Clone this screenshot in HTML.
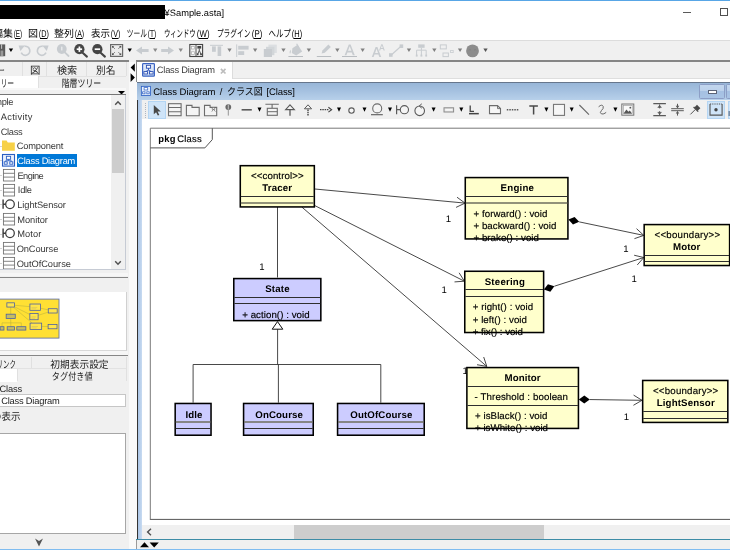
<!DOCTYPE html>
<html><head><meta charset="utf-8"><title>Sample.asta</title>
<style>
html,body{margin:0;padding:0}
body{width:730px;height:550px;overflow:hidden;background:#f0f0f0;position:relative;font-family:"Liberation Sans","Noto Sans CJK JP",sans-serif;text-rendering:geometricPrecision}
#w{position:absolute;left:0;top:0;width:730px;height:550px;overflow:hidden;will-change:transform}
.a{position:absolute;display:block}
.t{position:absolute;white-space:pre;line-height:1;font-family:"Liberation Sans","Noto Sans CJK JP",sans-serif}
svg{overflow:visible}
svg text{font-family:"Liberation Sans","Noto Sans CJK JP",sans-serif;text-rendering:geometricPrecision}
</style></head><body><div id="w">
<div class="a" style="left:0px;top:0px;width:730px;height:40px;background:#fff;"></div>
<div class="a" style="left:0px;top:0px;width:730px;height:1px;background:#58a6e6;"></div>
<div class="a" style="left:0px;top:4.8px;width:165px;height:14.2px;background:#000;"></div>
<span class="t" style="left:164.6px;top:9px;font-size:9.3px;color:#000;">¥Sample.asta]</span>
<div class="a" style="left:682.8px;top:11.9px;width:8.2px;height:0.9px;background:#5a5a5a;"></div>
<div class="a" style="left:720px;top:8.2px;width:8.4px;height:8.2px;border:0.85px solid #505050;box-sizing:border-box;"></div>
<svg class="a" style="left:-7.2px;top:27.21px" width="20.2" height="13.26" viewBox="0 -9.69 20.2 13.26"><text x="0" y="0" font-size="10" fill="#000">編集</text></svg>
<svg class="a" style="left:12.5px;top:27.21px" width="10.9" height="13.26" viewBox="0 -9.69 10.9 13.26"><text x="0.7" y="0" font-size="10" fill="#000" textLength="8.5" lengthAdjust="spacingAndGlyphs">(E)</text></svg>
<div class="a" style="left:15.1px;top:37.6px;width:4.7px;height:0.8px;background:#000;"></div>
<svg class="a" style="left:27.8px;top:27.21px" width="10.5" height="13.26" viewBox="0 -9.69 10.5 13.26"><text x="0" y="0" font-size="10" fill="#000">図</text></svg>
<svg class="a" style="left:37.8px;top:27.21px" width="12.7" height="13.26" viewBox="0 -9.69 12.7 13.26"><text x="0.8" y="0" font-size="10" fill="#000" textLength="10.1" lengthAdjust="spacingAndGlyphs">(D)</text></svg>
<div class="a" style="left:40.4px;top:37.6px;width:6.5px;height:0.8px;background:#000;"></div>
<svg class="a" style="left:54.3px;top:27.21px" width="20" height="13.26" viewBox="0 -9.69 20 13.26"><text x="0" y="0" font-size="10" fill="#000">整列</text></svg>
<svg class="a" style="left:73.8px;top:27.21px" width="12" height="13.26" viewBox="0 -9.69 12 13.26"><text x="0.8" y="0" font-size="10" fill="#000" textLength="9.4" lengthAdjust="spacingAndGlyphs">(A)</text></svg>
<div class="a" style="left:76.4px;top:37.6px;width:5.8px;height:0.8px;background:#000;"></div>
<svg class="a" style="left:90.6px;top:27.21px" width="19.7" height="13.26" viewBox="0 -9.69 19.7 13.26"><text x="0" y="0" font-size="10" fill="#000" textLength="19" lengthAdjust="spacingAndGlyphs">表示</text></svg>
<svg class="a" style="left:109.8px;top:27.21px" width="12.2" height="13.26" viewBox="0 -9.69 12.2 13.26"><text x="0.8" y="0" font-size="10" fill="#000" textLength="9.6" lengthAdjust="spacingAndGlyphs">(V)</text></svg>
<div class="a" style="left:112.4px;top:37.6px;width:6px;height:0.8px;background:#000;"></div>
<svg class="a" style="left:126px;top:27.21px" width="22.2" height="13.26" viewBox="0 -9.69 22.2 13.26"><text x="0.7" y="0" font-size="10" fill="#000" textLength="20.2" lengthAdjust="spacingAndGlyphs">ツール</text></svg>
<svg class="a" style="left:147.4px;top:27.21px" width="10.8" height="13.26" viewBox="0 -9.69 10.8 13.26"><text x="0.7" y="0" font-size="10" fill="#000" textLength="8.4" lengthAdjust="spacingAndGlyphs">(T)</text></svg>
<div class="a" style="left:150px;top:37.6px;width:4.6px;height:0.8px;background:#000;"></div>
<svg class="a" style="left:162.5px;top:27.21px" width="34.5" height="13.26" viewBox="0 -9.69 34.5 13.26"><text x="0.9" y="0" font-size="10" fill="#000" textLength="31.8" lengthAdjust="spacingAndGlyphs">ウィンドウ</text></svg>
<svg class="a" style="left:196.2px;top:27.21px" width="15.4" height="13.26" viewBox="0 -9.69 15.4 13.26"><text x="0.85" y="0" font-size="10" fill="#000" textLength="12.7" lengthAdjust="spacingAndGlyphs">(W)</text></svg>
<div class="a" style="left:198.8px;top:37.6px;width:9.2px;height:0.8px;background:#000;"></div>
<svg class="a" style="left:215.9px;top:27.21px" width="35.9" height="13.26" viewBox="0 -9.69 35.9 13.26"><text x="0.9" y="0" font-size="10" fill="#000" textLength="33.5" lengthAdjust="spacingAndGlyphs">プラグイン</text></svg>
<svg class="a" style="left:251px;top:27.21px" width="13.2" height="13.26" viewBox="0 -9.69 13.2 13.26"><text x="0.85" y="0" font-size="10" fill="#000" textLength="10.5" lengthAdjust="spacingAndGlyphs">(P)</text></svg>
<div class="a" style="left:253.6px;top:37.6px;width:7px;height:0.8px;background:#000;"></div>
<svg class="a" style="left:268px;top:27.21px" width="24" height="13.26" viewBox="0 -9.69 24 13.26"><text x="0.5" y="0" font-size="10" fill="#000" textLength="22.4" lengthAdjust="spacingAndGlyphs">ヘルプ</text></svg>
<svg class="a" style="left:291.2px;top:27.21px" width="13" height="13.26" viewBox="0 -9.69 13 13.26"><text x="0.8" y="0" font-size="10" fill="#000" textLength="10.4" lengthAdjust="spacingAndGlyphs">(H)</text></svg>
<div class="a" style="left:293.8px;top:37.6px;width:6.8px;height:0.8px;background:#000;"></div>
<div class="a" style="left:0px;top:40px;width:730px;height:1px;background:#dcdcdc;"></div>
<div class="a" style="left:0px;top:41px;width:730px;height:20px;background:#f0f0f0;"></div>
<div class="a" style="left:0px;top:549px;width:730px;height:1px;background:#7fbcf0;"></div>
<svg class="a" style="left:0;top:41px" width="500" height="20" viewBox="0 41 500 20"><rect x="-2" y="44.4" width="7.2" height="11.8" fill="#5a5a5a"/><rect x="1.2" y="44.4" width="0.9" height="4.4" fill="#d8d8d8"/><rect x="-1" y="50.6" width="4.6" height="5.6" fill="#777"/><rect x="1.6" y="50.6" width="0.8" height="5.6" fill="#ccc"/><path d="M8.8 48.5h4.3l-2.15 3.6z" fill="#000"/><path d="M24.52 46.37A4.5 4.5 0 1 1 21.22 52.7" fill="none" stroke="#c8ccd0" stroke-width="1.7"/><path d="M18.600 45.400h6.400l-4.600 5.600z" fill="#c8ccd0"/><path d="M42.68 46.37A4.5 4.5 0 1 0 45.98 52.7" fill="none" stroke="#c8ccd0" stroke-width="1.7"/><path d="M48.600 45.400h-6.400l4.600 5.600z" fill="#c8ccd0"/><circle cx="61.800" cy="49" r="4.900" fill="#c8ccd0"/><path d="M64.800 52.400l3.800 3.600" stroke="#c8ccd0" stroke-width="1.800" stroke-linecap="round"/><rect x="61" y="46.400" width="1.500" height="4.200" rx="0.700" fill="#e6e8ea"/><circle cx="79.4" cy="49.200" r="5.100" fill="#454545"/><path d="M82.60000000000001 52.800l4.300 3.800" stroke="#454545" stroke-width="2.100" stroke-linecap="round"/><path d="M76.7 49.200h5.400" stroke="#fff" stroke-width="1.700"/><path d="M79.4 46.500v5.400" stroke="#fff" stroke-width="1.700"/><circle cx="97.4" cy="49.200" r="5.100" fill="#454545"/><path d="M100.60000000000001 52.800l4.300 3.800" stroke="#454545" stroke-width="2.100" stroke-linecap="round"/><path d="M94.7 49.200h5.400" stroke="#fff" stroke-width="1.700"/><rect x="110.600" y="44.600" width="12" height="11.800" fill="#ececec" stroke="#6a6a6a" stroke-width="1.200"/><path d="M112.3 46.3l2.6 2.6M120.9 46.3l-2.6 2.6M112.3 54.7l2.6-2.6M120.9 54.7l-2.6-2.6" stroke="#666" stroke-width="0.8"/><path d="M112 46h2.2L112 48.2zM121.2 46h-2.2l2.2 2.2zM112 55h2.2L112 52.8zM121.2 55h-2.2l2.2-2.2z" fill="#555"/><path d="M127.6 48.5h4.3l-2.15 3.6z" fill="#000"/><path d="M136 50.5l6-4v2.6h6.6v2.8H142v2.6z" fill="#c8ccd0"/><path d="M153.1 48.5h4.3l-2.15 3.6z" fill="#8a8a8a"/><path d="M174 50.5l-6-4v2.6h-6.8v2.8h6.8v2.6z" fill="#c8ccd0"/><path d="M178.6 48.5h4.3l-2.15 3.6z" fill="#8a8a8a"/><rect x="189.800" y="44.500" width="12.800" height="12" fill="#f2f2f2" stroke="#454545" stroke-width="1.100"/><path d="M196 44.500v12" stroke="#454545" stroke-width="0.900"/><rect x="191.500" y="46.600" width="2.800" height="2.400" fill="#fff" stroke="#a8a8a8" stroke-width="0.700"/><rect x="191.500" y="51.800" width="2.800" height="2.600" fill="#fff" stroke="#a8a8a8" stroke-width="0.700"/><rect x="197.400" y="46" width="3.800" height="2.600" fill="#454545"/><path d="M199.300 48.600v1.800M197.600 54.400l1.700-4 1.700 4" fill="none" stroke="#454545" stroke-width="0.900"/><rect x="196.800" y="53.400" width="1.700" height="1.800" fill="#454545"/><rect x="200.200" y="53.400" width="1.700" height="1.800" fill="#454545"/><rect x="210" y="44.800" width="13" height="1" fill="#c8ccd0"/><rect x="212" y="46.400" width="3.800" height="5.400" fill="#c8ccd0"/><rect x="217.600" y="46.400" width="3.600" height="9.600" fill="#c8ccd0"/><path d="M227.4 48.500h4.300l-2.150 3.600z" fill="#808080"/><rect x="236.200" y="44.400" width="1" height="12.600" fill="#c8ccd0"/><rect x="238.200" y="45.800" width="10.400" height="3.800" fill="#c8ccd0"/><rect x="238.200" y="51.200" width="6" height="3.800" fill="#c8ccd0"/><path d="M253 48.500h4.300l-2.150 3.600z" fill="#808080"/><rect x="268.400" y="44.600" width="8.400" height="8.400" fill="#dcdfe2"/><rect x="266" y="46.800" width="8.400" height="8.400" fill="#d2d6d9"/><rect x="263.800" y="49" width="8.200" height="8" fill="#c8ccd0"/><path d="M281.3 48.500h4.300l-2.150 3.600z" fill="#808080"/><path d="M292.4 48.200l5.200-3.400 4.600 6.600-6 4.200-4.400-2.600z" fill="#c8ccd0"/><path d="M296.6 43.800l2.400 4" stroke="#c8ccd0" stroke-width="1.200"/><path d="M290.6 49.400q-1.800 2.600-0.600 4.600 1.600-1.600 0.600-4.600z" fill="#c8ccd0"/><rect x="288.400" y="56" width="14.600" height="1" fill="#b9bdc1"/><path d="M306.7 48.500h4.300l-2.150 3.600z" fill="#808080"/><path d="M321.6 53.600l0.800-3.200 6-5.800 2.400 2.400-6 5.800z" fill="#c8ccd0"/><rect x="316.800" y="56" width="14.400" height="1" fill="#b9bdc1"/><path d="M335.2 48.500h4.300l-2.150 3.600z" fill="#808080"/><path d="M344.6 55.200l4.200-10.600h1.800l4.200 10.600h-2l-1-2.800h-4.400l-1 2.800zM348 50.800h3.400l-1.700-4.600z" fill="#c8ccd0"/><rect x="342" y="56" width="15" height="1" fill="#b9bdc1"/><path d="M360.500 48.500h4.300l-2.150 3.600z" fill="#808080"/><path d="M371.800 57l3.800-10h1.800l3.800 10h-1.900l-0.900-2.500h-3.900l-0.900 2.500zM375.100 53h2.900l-1.450-4.200z" fill="#c8ccd0"/><path d="M379 50.400l2.300-6.200h1.200l2.300 6.200h-1.200l-0.500-1.500h-2.400l-0.500 1.500zM381 47.900h1.800l-0.900-2.600z" fill="#c8ccd0"/><path d="M391 55.200l10-9" stroke="#c8ccd0" stroke-width="1.200"/><rect x="389" y="53.200" width="3.600" height="3.600" fill="#c8ccd0"/><rect x="399.600" y="44.400" width="3.600" height="3.600" fill="#c8ccd0"/><path d="M406.800 48.500h4.300l-2.150 3.600z" fill="#808080"/><rect x="418.200" y="44.400" width="6.400" height="3.400" fill="#c8ccd0"/><path d="M421.400 47.800v2.400M416.600 55.600v-5.400h9.600v5.400M421.400 50.200v5.400" fill="none" stroke="#c8ccd0" stroke-width="1"/><rect x="415.800" y="54.600" width="1.800" height="2" fill="#c8ccd0"/><rect x="420.500" y="54.600" width="1.800" height="2" fill="#c8ccd0"/><rect x="425.300" y="54.600" width="1.800" height="2" fill="#c8ccd0"/><path d="M432.200 48.500h4.300l-2.150 3.600z" fill="#808080"/><rect x="440.300" y="44.900" width="6" height="4" fill="none" stroke="#c8ccd0" stroke-width="1"/><rect x="443" y="53" width="5.400" height="3.600" fill="none" stroke="#c8ccd0" stroke-width="1"/><rect x="450.600" y="50.400" width="2.600" height="2.200" fill="none" stroke="#c8ccd0" stroke-width="0.800"/><path d="M457.900 48.500h4.300l-2.150 3.600z" fill="#808080"/><circle cx="472.500" cy="50.900" r="6.400" fill="#8c8c8c"/><path d="M468.800 50.200q1.100-1.300 2.200 0M474 50.200q1.100-1.300 2.200 0" fill="none" stroke="#7c7c7c" stroke-width="0.700"/><path d="M483.400 48.500h4.300l-2.150 3.600z" fill="#555"/></svg>
<div class="a" style="left:0px;top:60.3px;width:128.6px;height:1.3px;background:#858585;"></div>
<div class="a" style="left:0px;top:62px;width:126px;height:27px;background:#f0f0f0;"></div>
<div class="a" style="left:0px;top:75.5px;width:126px;height:0.8px;background:#e2e2e2;"></div>
<div class="a" style="left:0px;top:88.3px;width:126px;height:0.8px;background:#e2e2e2;"></div>
<div class="a" style="left:22px;top:62px;width:0.8px;height:13.5px;background:#e0e0e0;"></div>
<div class="a" style="left:46.4px;top:62px;width:0.8px;height:13.5px;background:#e0e0e0;"></div>
<div class="a" style="left:86.2px;top:62px;width:0.8px;height:13.5px;background:#e0e0e0;"></div>
<div class="a" style="left:126px;top:62px;width:0.8px;height:13.5px;background:#e0e0e0;"></div>
<div class="a" style="left:0px;top:75.6px;width:38px;height:13.4px;background:#fff;"></div>
<div class="a" style="left:38px;top:76px;width:0.8px;height:12.5px;background:#e0e0e0;"></div>
<svg class="a" style="left:-3.6px;top:64.32px" width="10" height="13.52" viewBox="0 -9.88 10 13.52"><text x="0" y="0" font-size="10.2" fill="#222" textLength="9" lengthAdjust="spacingAndGlyphs">ー</text></svg>
<svg class="a" style="left:29.8px;top:64.43px" width="11" height="13.78" viewBox="0 -10.07 11 13.78"><text x="0" y="0" font-size="10.4" fill="#222">図</text></svg>
<svg class="a" style="left:56.6px;top:64.43px" width="21.2" height="13.78" viewBox="0 -10.07 21.2 13.78"><text x="0" y="0" font-size="10.4" fill="#222" textLength="20.2" lengthAdjust="spacingAndGlyphs">検索</text></svg>
<svg class="a" style="left:96.4px;top:64.43px" width="20.8" height="13.78" viewBox="0 -10.07 20.8 13.78"><text x="0" y="0" font-size="10.4" fill="#222" textLength="19.5" lengthAdjust="spacingAndGlyphs">別名</text></svg>
<svg class="a" style="left:-7.4px;top:76.83px" width="23" height="13.78" viewBox="0 -10.07 23 13.78"><text x="0.7" y="0" font-size="10.4" fill="#222" textLength="20.5" lengthAdjust="spacingAndGlyphs">ツリー</text></svg>
<svg class="a" style="left:61.4px;top:76.83px" width="42" height="13.78" viewBox="0 -10.07 42 13.78"><text x="0.7" y="0" font-size="10.4" fill="#222" textLength="39.5" lengthAdjust="spacingAndGlyphs">階層ツリー</text></svg>
<svg class="a" style="left:117.5px;top:90.6px" width="7" height="4"><path d="M0 0h7L3.5 3.6z" fill="#000"/></svg>
<div class="a" style="left:0px;top:93.8px;width:125.8px;height:1.1px;background:#767676;"></div>
<div class="a" style="left:0px;top:88.4px;width:126px;height:1.4px;background:#f8f8f8;"></div>
<div class="a" style="left:0px;top:95px;width:125.2px;height:174.5px;background:#fff;border-right:0.8px solid #c6cbd4;border-bottom:0.8px solid #c6cbd4;box-sizing:content-box;"></div>
<div class="a" style="left:111.2px;top:95px;width:14px;height:174.5px;background:#f0f0f0;"></div>
<div class="a" style="left:111.5px;top:109.3px;width:12.7px;height:63.6px;background:#cdcdcd;"></div>
<svg class="a" style="left:114px;top:100.2px" width="8" height="6"><path d="M1.200 4.800L4 1.700 6.800 4.800" fill="none" stroke="#505050" stroke-width="1.4"/></svg>
<svg class="a" style="left:114px;top:259.6px" width="8" height="6"><path d="M1.200 1.200L4 4.300 6.800 1.200" fill="none" stroke="#505050" stroke-width="1.4"/></svg>
<div class="a" style="left:16.9px;top:154px;width:60.2px;height:12.6px;background:#0078d7;"></div>
<span class="t" style="left:-5.75px;top:98px;font-size:9.3px;color:#383838;letter-spacing:-0.29px;">mple</span>
<span class="t" style="left:0.65px;top:113px;font-size:9.3px;color:#383838;letter-spacing:0.32px;">Activity</span>
<span class="t" style="left:0.65px;top:128px;font-size:9.3px;color:#383838;letter-spacing:-0.29px;">Class</span>
<span class="t" style="left:16.65px;top:142px;font-size:9.3px;color:#383838;letter-spacing:-0.17px;">Component</span>
<span class="t" style="left:17.25px;top:157px;font-size:9.3px;color:#fff;letter-spacing:-0.24px;">Class Diagram</span>
<span class="t" style="left:17.45px;top:172px;font-size:9.3px;color:#383838;letter-spacing:-0.53px;">Engine</span>
<span class="t" style="left:17.85px;top:186px;font-size:9.3px;color:#383838;letter-spacing:-0.3px;">Idle</span>
<span class="t" style="left:17.25px;top:201px;font-size:9.3px;color:#383838;letter-spacing:-0.09px;">LightSensor</span>
<span class="t" style="left:17.25px;top:216px;font-size:9.3px;color:#383838;letter-spacing:-0.05px;">Monitor</span>
<span class="t" style="left:17.25px;top:230px;font-size:9.3px;color:#383838;letter-spacing:0.08px;">Motor</span>
<span class="t" style="left:16.65px;top:245px;font-size:9.3px;color:#383838;letter-spacing:-0.1px;">OnCourse</span>
<span class="t" style="left:16.65px;top:260px;font-size:9.3px;color:#383838;letter-spacing:-0.05px;">OutOfCourse</span>
<div class="a" style="left:0px;top:145.63px;width:2.2px;height:0.7px;background:#d4d4d4;"></div>
<div class="a" style="left:0px;top:160.3px;width:2.2px;height:0.7px;background:#d4d4d4;"></div>
<div class="a" style="left:0px;top:174.97px;width:2.2px;height:0.7px;background:#d4d4d4;"></div>
<div class="a" style="left:0px;top:189.64px;width:2.2px;height:0.7px;background:#d4d4d4;"></div>
<div class="a" style="left:0px;top:204.31px;width:2.2px;height:0.7px;background:#d4d4d4;"></div>
<div class="a" style="left:0px;top:218.98px;width:2.2px;height:0.7px;background:#d4d4d4;"></div>
<div class="a" style="left:0px;top:233.65px;width:2.2px;height:0.7px;background:#d4d4d4;"></div>
<div class="a" style="left:0px;top:248.32px;width:2.2px;height:0.7px;background:#d4d4d4;"></div>
<div class="a" style="left:0px;top:262.99px;width:2.2px;height:0.7px;background:#d4d4d4;"></div>
<svg class="a" style="left:2.2px;top:140.43px" width="13" height="11"><path d="M0 0.600h4.600l1.200 1.800h7v8.400H0z" fill="#f7d147"/></svg>
<svg class="a" style="left:2.2px;top:154px" width="13" height="12.600"><rect x="0.500" y="0.500" width="12" height="11.600" fill="#eaf1fc" stroke="#2b5fc4" stroke-width="1.100"/><rect x="4.400" y="2.300" width="4.200" height="3" fill="#fff" stroke="#2b5fc4" stroke-width="0.900"/><rect x="2.200" y="7.800" width="3" height="2.400" fill="#fff" stroke="#2b5fc4" stroke-width="0.900"/><rect x="7.800" y="7.800" width="3" height="2.400" fill="#fff" stroke="#2b5fc4" stroke-width="0.900"/><path d="M6.500 5.300v1.400M3.700 7.800V6.700h5.600v1.100" fill="none" stroke="#2b5fc4" stroke-width="0.800"/></svg>
<svg class="a" style="left:2.8px;top:168.87px" width="12" height="12.600"><rect x="0.400" y="0.400" width="11.200" height="11.600" fill="#fff" stroke="#6e6e6e" stroke-width="0.850"/><path d="M0.400 4.300h11.200M0.400 8.100h11.200" stroke="#6e6e6e" stroke-width="0.850"/></svg>
<svg class="a" style="left:2.8px;top:183.54px" width="12" height="12.600"><rect x="0.400" y="0.400" width="11.200" height="11.600" fill="#fff" stroke="#6e6e6e" stroke-width="0.850"/><path d="M0.400 4.300h11.200M0.400 8.100h11.200" stroke="#6e6e6e" stroke-width="0.850"/></svg>
<svg class="a" style="left:2.8px;top:212.88px" width="12" height="12.600"><rect x="0.400" y="0.400" width="11.200" height="11.600" fill="#fff" stroke="#6e6e6e" stroke-width="0.850"/><path d="M0.400 4.300h11.200M0.400 8.100h11.200" stroke="#6e6e6e" stroke-width="0.850"/></svg>
<svg class="a" style="left:2.8px;top:242.22px" width="12" height="12.600"><rect x="0.400" y="0.400" width="11.200" height="11.600" fill="#fff" stroke="#6e6e6e" stroke-width="0.850"/><path d="M0.400 4.300h11.200M0.400 8.100h11.200" stroke="#6e6e6e" stroke-width="0.850"/></svg>
<svg class="a" style="left:2.8px;top:256.89px" width="12" height="12.600"><rect x="0.400" y="0.400" width="11.200" height="11.600" fill="#fff" stroke="#6e6e6e" stroke-width="0.850"/><path d="M0.400 4.300h11.200M0.400 8.100h11.200" stroke="#6e6e6e" stroke-width="0.850"/></svg>
<svg class="a" style="left:2.4px;top:199.11px" width="13" height="10.400"><circle cx="8" cy="5.200" r="4.300" fill="#fff" stroke="#3a3a3a" stroke-width="1.250"/><path d="M1.100 0.600v9.200M1.100 5.200h2.600" stroke="#3a3a3a" stroke-width="1.400" fill="none"/></svg>
<svg class="a" style="left:2.4px;top:228.45px" width="13" height="10.400"><circle cx="8" cy="5.200" r="4.300" fill="#fff" stroke="#3a3a3a" stroke-width="1.250"/><path d="M1.100 0.600v9.200M1.100 5.200h2.600" stroke="#3a3a3a" stroke-width="1.400" fill="none"/></svg>
<div class="a" style="left:0px;top:270px;width:129px;height:22px;background:#f0f0f0;"></div>
<div class="a" style="left:0px;top:269.2px;width:125.8px;height:0.8px;background:#c6cbd4;"></div>
<div class="a" style="left:0px;top:272.6px;width:128px;height:3.8px;background:#f6f6f6;"></div>
<div class="a" style="left:0px;top:276.8px;width:128px;height:1px;background:#868686;"></div>
<div class="a" style="left:0px;top:292px;width:126.4px;height:58px;background:#fff;border-right:1px solid #d0d0d0;border-bottom:1px solid #d8d8d8;"></div>
<svg class="a" style="left:0;top:298.4px;overflow:hidden" width="60" height="41" viewBox="0 298.4 60 41"><rect x="-1" y="299.5" width="60" height="39" fill="#ffe034" stroke="#6474a8" stroke-width="0.9"/><path d="M14.56 305.64L29.96 307.06M14.56 307.25L29.9 314.91M13.22 307.46L32.2 323.47M10.72 307.45L10.72 314.54M10.73 318.91L10.73 323.25M2.04 327.12L2.04 323.25M2.04 323.25L21.32 323.25M21.32 323.25L21.32 327.12M10.81 323.25L10.81 327.12M40.55 308.6L48.3 310.31M38.05 315.75L48.3 312.53M41.63 326.79L48.12 326.88" stroke="#b4ac3c" stroke-width="0.5" fill="none"/><rect x="6.87" y="303.23" width="7.69" height="4.22" fill="#ffe54a" stroke="#4258aa" stroke-width="0.75"/><rect x="6.16" y="314.57" width="9.09" height="4.38" fill="#c4bc62" stroke="#4258aa" stroke-width="0.75"/><rect x="0.14" y="327.12" width="3.84" height="3.35" fill="#c4bc62" stroke="#4258aa" stroke-width="0.75"/><rect x="7.16" y="327.12" width="7.31" height="3.35" fill="#c4bc62" stroke="#4258aa" stroke-width="0.75"/><rect x="16.81" y="327.12" width="9.05" height="3.35" fill="#c4bc62" stroke="#4258aa" stroke-width="0.75"/><rect x="29.91" y="304.42" width="10.69" height="6.29" fill="#ffe54a" stroke="#4258aa" stroke-width="0.75"/><path d="M31.41 307.82h5.88M31.41 309.22h4.81" stroke="#c9b860" stroke-width="0.5"/><rect x="29.86" y="313.84" width="8.25" height="6.31" fill="#ffe54a" stroke="#4258aa" stroke-width="0.75"/><path d="M31.36 317.24h4.54M31.36 318.64h3.71" stroke="#c9b860" stroke-width="0.5"/><rect x="30.07" y="323.51" width="11.6" height="6.27" fill="#ffe54a" stroke="#4258aa" stroke-width="0.75"/><path d="M31.57 326.91h6.38M31.57 328.31h5.22" stroke="#c9b860" stroke-width="0.5"/><rect x="48.26" y="309.14" width="8.93" height="4.27" fill="#ffe54a" stroke="#4258aa" stroke-width="0.75"/><rect x="48.11" y="324.81" width="8.9" height="4.37" fill="#ffe54a" stroke="#4258aa" stroke-width="0.75"/></svg>
<div class="a" style="left:0px;top:351px;width:128px;height:3.8px;background:#f6f6f6;"></div>
<div class="a" style="left:0px;top:355px;width:128px;height:1px;background:#868686;"></div>
<div class="a" style="left:0px;top:357px;width:126px;height:24.6px;background:#f0f0f0;"></div>
<div class="a" style="left:0px;top:368.4px;width:126px;height:0.8px;background:#e2e2e2;"></div>
<div class="a" style="left:31px;top:357px;width:0.8px;height:11.4px;background:#e0e0e0;"></div>
<div class="a" style="left:125.6px;top:357px;width:0.8px;height:24px;background:#e0e0e0;"></div>
<div class="a" style="left:0px;top:368.8px;width:17px;height:13.2px;background:#fff;"></div>
<div class="a" style="left:17px;top:368.8px;width:0.8px;height:12.6px;background:#e0e0e0;"></div>
<svg class="a" style="left:-4.8px;top:357.51px" width="22.8" height="13.39" viewBox="0 -9.79 22.8 13.39"><text x="1.6" y="0" font-size="10.1" fill="#222" textLength="19.3" lengthAdjust="spacingAndGlyphs">リンク</text></svg>
<svg class="a" style="left:50px;top:357.51px" width="60" height="13.39" viewBox="0 -9.79 60 13.39"><text x="0.3" y="0" font-size="10.1" fill="#222" textLength="58.3" lengthAdjust="spacingAndGlyphs">初期表示設定</text></svg>
<svg class="a" style="left:50.8px;top:369.81px" width="43" height="13.39" viewBox="0 -9.79 43 13.39"><text x="0.8" y="0" font-size="10.1" fill="#222" textLength="40.9" lengthAdjust="spacingAndGlyphs">タグ付き値</text></svg>
<span class="t" style="left:-0.4px;top:385px;font-size:9.3px;color:#1a1a1a;letter-spacing:-0.2px;">Class</span>
<div class="a" style="left:0px;top:393.8px;width:125.6px;height:12.8px;background:#fff;border:1px solid #c6c6c6;border-left:none;box-sizing:border-box;"></div>
<span class="t" style="left:1.2px;top:397px;font-size:9.3px;color:#1a1a1a;letter-spacing:-0.2px;">Class Diagram</span>
<svg class="a" style="left:-8.6px;top:409.91px" width="31" height="13.39" viewBox="0 -9.79 31 13.39"><text x="0.9" y="0" font-size="10.1" fill="#222" textLength="28.5" lengthAdjust="spacingAndGlyphs">の表示</text></svg>
<div class="a" style="left:0px;top:433.2px;width:126.4px;height:100.4px;background:#fff;border:1px solid #a6a6a6;border-left:none;box-sizing:border-box;"></div>
<svg class="a" style="left:34.6px;top:538px" width="8" height="9"><path d="M0 0.4L4 8.4 8 0.4 4 3z" fill="#555"/></svg>
<div class="a" style="left:128.6px;top:62px;width:8px;height:487px;background:#f9f9f9;"></div>
<svg class="a" style="left:130px;top:62.6px" width="6" height="20"><path d="M4.8 0.4v8.4L0.6 4.6zM0.6 10.2v8.8L4.9 14.6z" fill="#000"/></svg>
<div class="a" style="left:136.2px;top:60.3px;width:594px;height:1.3px;background:#858585;"></div>
<div class="a" style="left:137px;top:62px;width:593px;height:16.4px;background:#f0f0f0;"></div>
<div class="a" style="left:232px;top:78px;width:498px;height:0.8px;background:#dedede;"></div>
<div class="a" style="left:137px;top:62px;width:95.2px;height:20px;background:#fff;"></div>
<div class="a" style="left:232.2px;top:62px;width:0.8px;height:16.6px;background:#dcdcdc;"></div>
<div class="a" style="left:137px;top:78.8px;width:593px;height:3.2px;background:#fff;"></div>
<div class="a" style="left:136.2px;top:61px;width:1px;height:21px;background:#8a8a8a;"></div>
<div class="a" style="left:137.2px;top:99.6px;width:1px;height:439.6px;background:#333;"></div>
<svg class="a" style="left:142px;top:63.2px" width="13" height="13.8"><defs><linearGradient id="ig" x1="0" y1="0" x2="0" y2="1"><stop offset="0" stop-color="#e9f0fb"/><stop offset="1" stop-color="#c9d9f2"/></linearGradient></defs><rect x="0.6" y="0.6" width="11.8" height="12.6" rx="0.8" fill="url(#ig)" stroke="#3d66c4" stroke-width="1.2"/><rect x="4.4" y="2.3" width="4.2" height="2.9" fill="#fff" stroke="#2a4fb4" stroke-width="0.9"/><rect x="1.9" y="8.6" width="3.6" height="2.4" fill="#fff" stroke="#2a4fb4" stroke-width="0.9"/><rect x="7.5" y="8.6" width="3.6" height="2.4" fill="#fff" stroke="#2a4fb4" stroke-width="0.9"/><path d="M6.5 5.2v2M3.700 8.600L6.500 7.200l2.800 1.400" fill="none" stroke="#2a4fb4" stroke-width="0.9"/></svg>
<span class="t" style="left:156.85px;top:66px;font-size:9.3px;color:#3a3a3a;letter-spacing:-0.24px;">Class Diagram</span>
<svg class="a" style="left:220.1px;top:67.5px" width="6.4" height="6.4"><path d="M0.900 0.900l4.600 4.600M5.500 0.900L0.900 5.500" stroke="#bdbdbd" stroke-width="1.700" fill="none"/></svg>
<div class="a" style="left:136.9px;top:82px;width:593.1px;height:18.2px;background:linear-gradient(#66768c 0,#66768c 0.8px,#98b6d8 1.1px,#a5c1e0 50%,#b7d0ea 100%);"></div>
<svg class="a" style="left:141.3px;top:85.9px" width="10" height="10" viewBox="0 0 11 11"><rect x="0.4" y="0.4" width="10" height="10" fill="#e8f0fb" stroke="#2b5fc4" stroke-width="0.9"/><rect x="3.4" y="1.8" width="4" height="2.6" fill="#fff" stroke="#2b5fc4" stroke-width="0.8"/><rect x="1.8" y="6.4" width="2.6" height="2.2" fill="#fff" stroke="#2b5fc4" stroke-width="0.8"/><rect x="6.4" y="6.4" width="2.6" height="2.2" fill="#fff" stroke="#2b5fc4" stroke-width="0.8"/></svg>
<span class="t" style="left:153.2px;top:88px;font-size:9.5px;color:#000;">Class Diagram</span>
<span class="t" style="left:219.8px;top:88px;font-size:9.5px;color:#000;">/</span>
<svg class="a" style="left:226px;top:84.91px" width="38.6" height="13.26" viewBox="0 -9.69 38.6 13.26"><text x="0.9" y="0" font-size="10" fill="#000" textLength="35.9" lengthAdjust="spacingAndGlyphs">クラス図</text></svg>
<span class="t" style="left:266.4px;top:88px;font-size:9.5px;color:#000;letter-spacing:-0.1px;">[Class]</span>
<div class="a" style="left:699.4px;top:83.7px;width:25.6px;height:14.9px;background:linear-gradient(#c2d6ee 0%,#bdd2ec 42%,#a5c0e2 46%,#a9c4e5 100%);border:1px solid #8c9ec6;box-sizing:border-box;border-radius:1.5px;"></div>
<div class="a" style="left:726px;top:83.7px;width:10px;height:14.9px;background:linear-gradient(#c2d6ee 0%,#bdd2ec 42%,#a5c0e2 46%,#a9c4e5 100%);border:1px solid #8c9ec6;box-sizing:border-box;border-radius:1.5px;"></div>
<div class="a" style="left:707.8px;top:90.2px;width:9.2px;height:3.5px;background:#fff;border:0.7px solid #5c6478;box-sizing:border-box;"></div>
<div class="a" style="left:138.1px;top:100px;width:3.9px;height:439px;background:linear-gradient(90deg,#a9c4e6,#c8dbf1);"></div>
<div class="a" style="left:142px;top:100.2px;width:588px;height:19px;background:#f0f0f0;"></div>
<div class="a" style="left:148px;top:101px;width:18.2px;height:17.8px;background:#cfe4f8;border:1px solid #b4d5f3;box-sizing:border-box;"></div>
<div class="a" style="left:707.4px;top:101px;width:17.6px;height:17.8px;background:#cfe4f8;border:1px solid #b4d5f3;box-sizing:border-box;"></div>
<div class="a" style="left:727.6px;top:101px;width:6px;height:17.8px;background:#cfe4f8;border:1px solid #b4d5f3;box-sizing:border-box;"></div>
<div class="a" style="left:144.6px;top:103px;width:0.8px;height:0.9px;background:#aeb6c2;"></div>
<div class="a" style="left:144.6px;top:105px;width:0.8px;height:0.9px;background:#aeb6c2;"></div>
<div class="a" style="left:144.6px;top:107px;width:0.8px;height:0.9px;background:#aeb6c2;"></div>
<div class="a" style="left:144.6px;top:109px;width:0.8px;height:0.9px;background:#aeb6c2;"></div>
<div class="a" style="left:144.6px;top:111px;width:0.8px;height:0.9px;background:#aeb6c2;"></div>
<div class="a" style="left:144.6px;top:113px;width:0.8px;height:0.9px;background:#aeb6c2;"></div>
<div class="a" style="left:144.6px;top:115px;width:0.8px;height:0.9px;background:#aeb6c2;"></div>
<div class="a" style="left:144.6px;top:117px;width:0.8px;height:0.9px;background:#aeb6c2;"></div>
<div class="a" style="left:142px;top:119.2px;width:588px;height:406px;background:#fff;"></div>
<div class="a" style="left:142px;top:525px;width:588px;height:14px;background:#f0f0f0;"></div>
<div class="a" style="left:294.4px;top:525px;width:249.2px;height:13.6px;background:#cdcdcd;"></div>
<svg class="a" style="left:146px;top:528.4px" width="6" height="8"><path d="M5 0.8L1.6 4 5 7.2" fill="none" stroke="#505050" stroke-width="1.4"/></svg>
<div class="a" style="left:136.4px;top:539px;width:593.6px;height:1px;background:#3d8ca6;"></div>
<div class="a" style="left:136.4px;top:540px;width:1px;height:9px;background:#9a9a9a;"></div>
<svg class="a" style="left:139.6px;top:541.8px" width="19" height="6"><path d="M0 5.2h9L4.5 0.2zM9.6 0.4h9.2L14.2 5.4z" fill="#000"/></svg>
<svg class="a" style="left:142px;top:100px" width="588" height="19" viewBox="142 100 588 19"><path d="M153.800 105v9.200l2.300-2 1.700 3.400 1.500-0.700-1.700-3.300h3.200z" fill="#484848"/><rect x="168.500" y="103.700" width="12.600" height="12" fill="#f4f4f4" stroke="#6c6c6c" stroke-width="1.100"/><path d="M168.500 107.500h12.600M168.500 111.800h12.600" stroke="#6c6c6c" stroke-width="1.100"/><path d="M186.400 115.800v-10.400h5.600v2h7.200v8.400z" fill="#f4f4f4" stroke="#6c6c6c" stroke-width="1.100"/><path d="M204.500 115.800v-10.400h5.600v2h6.600v8.400z" fill="#f4f4f4" stroke="#6c6c6c" stroke-width="1.100"/><rect x="212.200" y="107.400" width="2.600" height="1.800" fill="#fff" stroke="#6c6c6c" stroke-width="0.700"/><path d="M213.500 109.200l-1.700 2.400M213.500 109.200l1.900 2.400" stroke="#6c6c6c" stroke-width="0.700"/><circle cx="228.300" cy="107.100" r="2.900" fill="#6a6a6a"/><path d="M228.300 104.400v11.200" stroke="#8a8a8a" stroke-width="0.900"/><path d="M228.300 104.600v4.800" stroke="#d8d8d8" stroke-width="0.700"/><path d="M241.600 109.800h10.200" stroke="#5a5a5a" stroke-width="1.600"/><path d="M257.500 107.600h4l-2 4.100z" fill="#000"/><path d="M265.400 104.300h13.400M272.100 104.300v3.600" stroke="#6c6c6c" stroke-width="1.100"/><rect x="267.300" y="108.300" width="10" height="7" fill="#f4f4f4" stroke="#6c6c6c" stroke-width="1.100"/><path d="M267.300 111.700h10" stroke="#6c6c6c" stroke-width="1"/><path d="M290 104.800l4.400 4.800h-8.800z" fill="#f4f4f4" stroke="#5a5a5a" stroke-width="1.100"/><path d="M290 109.600v6.200" stroke="#5a5a5a" stroke-width="1.300"/><path d="M308 104.800l3.600 4h-7.200z" fill="#f4f4f4" stroke="#5a5a5a" stroke-width="1"/><path d="M308 109.600v6.200" stroke="#444" stroke-width="1.400" stroke-dasharray="1.400 0.800"/><path d="M320 109.700h9" stroke="#444" stroke-width="1.300" stroke-dasharray="1.500 0.800"/><path d="M328.400 107.300l3.200 2.400-3.200 2.400" fill="none" stroke="#444" stroke-width="1.100"/><path d="M337 107.600h4l-2 4.100z" fill="#000"/><circle cx="351.500" cy="110.600" r="2.700" fill="#f6f6f6" stroke="#5a5a5a" stroke-width="1.100"/><path d="M362.500 107.600h4l-2 4.100z" fill="#000"/><circle cx="377.200" cy="108.400" r="4.500" fill="#f4f4f4" stroke="#6c6c6c" stroke-width="1.100"/><path d="M371 114.700h11.800" stroke="#5a5a5a" stroke-width="1.100"/><path d="M388 107.600h4l-2 4.100z" fill="#000"/><path d="M396.600 105.200v9M396.600 109.700h3.600" stroke="#5a5a5a" stroke-width="1.200"/><circle cx="404.400" cy="109.700" r="4.100" fill="#f4f4f4" stroke="#5a5a5a" stroke-width="1.100"/><circle cx="419.700" cy="110.800" r="4.800" fill="#f4f4f4" stroke="#5a5a5a" stroke-width="1.100"/><path d="M421.800 103.800l-2.600 2.200 2.600 2.200" fill="none" stroke="#5a5a5a" stroke-width="1"/><path d="M431.600 107.600h4l-2 4.100z" fill="#000"/><rect x="444" y="107.800" width="9.600" height="4.200" fill="#e4e4e4" stroke="#8a8a8a" stroke-width="1"/><rect x="445.400" y="109.200" width="6.800" height="1.400" fill="#fafafa"/><path d="M459.300 107.600h4l-2 4.100z" fill="#000"/><path d="M470.200 105.500v5.800h3.800" fill="none" stroke="#444" stroke-width="1.300"/><rect x="469" y="112.900" width="9.800" height="1.500" fill="#444"/><path d="M489.500 105.600h8l3 3v5h-11z" fill="#f6f6f6" stroke="#6c6c6c" stroke-width="1.100"/><path d="M497.500 105.600v3h3" fill="none" stroke="#6c6c6c" stroke-width="0.900"/><path d="M506.800 109.800h12.200" stroke="#5a5a5a" stroke-width="1.500" stroke-dasharray="1.500 1"/><path d="M529.300 105.900h8.600M533.600 105.900v8.600" stroke="#484848" stroke-width="1.500"/><path d="M544.400 107.600h4l-2 4.100z" fill="#000"/><rect x="553.500" y="104.400" width="11" height="11" fill="#f6f6f6" stroke="#777" stroke-width="1.100"/><path d="M569.700 107.600h4l-2 4.100z" fill="#000"/><path d="M579.400 105l9.600 9.600" stroke="#666" stroke-width="1.100"/><path d="M598.600 106.800q3.400-3 4.600-0.400 0.600 2.200-1.800 4.200-2.200 2.400 0.200 3.400 2.200 0.400 4.600-1.600" fill="none" stroke="#666" stroke-width="1"/><path d="M613.400 107.600h4l-2 4.100z" fill="#000"/><rect x="621.800" y="104" width="12" height="11.200" fill="#ececec" stroke="#777" stroke-width="1"/><rect x="623.400" y="105.600" width="8.800" height="8" fill="#fafafa" stroke="#999" stroke-width="0.600"/><path d="M623.600 113.400l2.800-4 2 2.400 1.400-1.200 2.200 2.800z" fill="#555"/><circle cx="630.300" cy="107.700" r="0.900" fill="#555"/><path d="M653.300 103.600h12.600M653.300 115.600h12.600" stroke="#5a5a5a" stroke-width="1.100"/><path d="M659.600 104.400v4M659.600 111.200v4" stroke="#5a5a5a" stroke-width="1"/><path d="M657.800 107.200l1.800-2.200 1.800 2.200zM657.800 112.600l1.800 2.400 1.800-2.400z" fill="#5a5a5a"/><path d="M657.600 107.400h4M657.600 112.400h4" stroke="#5a5a5a" stroke-width="0.800"/><path d="M671.200 108.700h12.600M671.200 110.700h12.600" stroke="#5a5a5a" stroke-width="1"/><path d="M677.500 103.800v4M677.500 111.600v4" stroke="#5a5a5a" stroke-width="1"/><path d="M675.700 105.800h3.600l-1.800 2.600zM675.700 113.600h3.600l-1.800-2.600z" fill="#5a5a5a"/><path d="M690.400 114.400l5-5" stroke="#555" stroke-width="1"/><path d="M694.400 107.600l2.600-2.800 3.400 3.400-2.800 2.600z" fill="#484848"/><path d="M693.600 107l4.600 4.600" stroke="#484848" stroke-width="1.300"/><path d="M710 104v11.100h12.100V104" fill="none" stroke="#555" stroke-width="1.100"/><path d="M710 104h12.100" stroke="#555" stroke-width="1" stroke-dasharray="1 0.800"/><circle cx="716" cy="109.800" r="1.700" fill="#444"/><rect x="728.400" y="111" width="2" height="5" fill="#7a8fa8"/></svg>
<svg class="a" style="left:142px;top:119px;overflow:hidden" width="588" height="406" viewBox="142 119 588 406"><g fill="none" stroke="#787878" stroke-width="1"><path d="M150.3 520V128.2H740"/><path d="M150.3 519.4H740" stroke="#555"/><path d="M150.3 147.9H204.9L212.3 139.6V128.2" stroke="#555"/></g><text x="158.2" y="142" font-size="9.4" font-weight="700" textLength="17.2" lengthAdjust="spacing">pkg</text><text x="177.2" y="142" font-size="9.4" stroke="#000" stroke-width="0.16" textLength="24.4" lengthAdjust="spacing">Class</text><path d="M568.4 219.6L572.98 224.55L579.17 221.86L574.58 216.91z" fill="#000" stroke="none"/><path d="M543.9 289.6L550.33 291.63L554.37 286.23L547.94 284.2z" fill="#000" stroke="none"/><path d="M578.8 399.4L584.24 403.38L589.8 399.56L584.35 395.58z" fill="#000" stroke="none"/><path d="M314.9 189L465 203.1M456.07 207.38L465 203.1M457.03 197.23L465 203.1M315 205.7L464.4 281.2M454.53 281.92L464.4 281.2M459.13 272.82L464.4 281.2M301.9 207.1L486.8 366.4M477.04 364.72L486.8 366.4M483.7 357L486.8 366.4M277.5 207V277.5M277.6 329V364.5M193.1 402.7V364.5H380.8V402.7M278.4 364.5V402.7M579.17 221.86L643.8 235.4M634.45 238.65L643.8 235.4M636.54 228.67L643.8 235.4M554.37 286.23L643.8 257.5M637.28 264.95L643.8 257.5M634.16 255.24L643.8 257.5M589.8 399.56L642 400.3M633.44 405.28L642 400.3M633.59 395.08L642 400.3" fill="none" stroke="#303030" stroke-width="0.88"/><path d="M277.5 321.6L272.2 329.2H282.8z" fill="#fff" stroke="#111" stroke-width="1"/><text x="259.2" y="270" font-size="9.6">1</text><text x="445.8" y="222" font-size="9.6">1</text><text x="441.4" y="293" font-size="9.6">1</text><text x="623.2" y="252" font-size="9.6">1</text><text x="631.4" y="282" font-size="9.6">1</text><text x="623.8" y="420" font-size="9.6">1</text><text x="462.6" y="374" font-size="9.6">1</text><rect x="240.28" y="165.68" width="74.05" height="41.25" fill="#ffffcc" stroke="#000" stroke-width="1.55"/><path d="M240.8 196.5H313.8" stroke="#2e2e2e" stroke-width="1"/><path d="M240.8 203H313.8" stroke="#6e6e5e" stroke-width="1.3"/><text x="251" y="179" font-size="9.7" stroke="#000" stroke-width="0.16" textLength="52.6" lengthAdjust="spacing">&lt;&lt;control&gt;&gt;</text><text x="262.3" y="191" font-size="9.7" font-weight="700" textLength="29.8" lengthAdjust="spacing">Tracer</text><rect x="233.5" y="278.3" width="87.6" height="42.6" fill="#ccccff"/><text x="242.2" y="318" font-size="9.7" stroke="#000" stroke-width="0.16" textLength="67.4" lengthAdjust="spacing">+ action() : void</text><rect x="233.78" y="278.57" width="87.05" height="42.05" fill="none" stroke="#000" stroke-width="1.55"/><path d="M234.3 297.5H320.3" stroke="#2e2e2e" stroke-width="1"/><path d="M234.3 303.5H320.3" stroke="#2e2e2e" stroke-width="1"/><text x="265.2" y="292" font-size="9.7" font-weight="700" textLength="24.4" lengthAdjust="spacing">State</text><rect x="175.18" y="403.47" width="35.85" height="31.75" fill="#ccccff" stroke="#000" stroke-width="1.55"/><path d="M175.7 422H210.5" stroke="#6e6e5e" stroke-width="1.3"/><path d="M175.7 428.5H210.5" stroke="#2e2e2e" stroke-width="1"/><text x="185.5" y="418" font-size="9.7" font-weight="700" textLength="17" lengthAdjust="spacing">Idle</text><rect x="243.58" y="403.47" width="69.65" height="31.75" fill="#ccccff" stroke="#000" stroke-width="1.55"/><path d="M244.1 422H312.7" stroke="#6e6e5e" stroke-width="1.3"/><path d="M244.1 428.5H312.7" stroke="#2e2e2e" stroke-width="1"/><text x="255.2" y="418" font-size="9.7" font-weight="700" textLength="47.8" lengthAdjust="spacing">OnCourse</text><rect x="337.57" y="403.47" width="86.65" height="31.75" fill="#ccccff" stroke="#000" stroke-width="1.55"/><path d="M338.1 422H423.7" stroke="#6e6e5e" stroke-width="1.3"/><path d="M338.1 428.5H423.7" stroke="#2e2e2e" stroke-width="1"/><text x="350.3" y="418" font-size="9.7" font-weight="700" textLength="62" lengthAdjust="spacing">OutOfCourse</text><rect x="465" y="177.3" width="103.2" height="61.9" fill="#ffffcc"/><text x="473.5" y="217" font-size="9.7" stroke="#000" stroke-width="0.16" textLength="73.8" lengthAdjust="spacing">+ forward() : void</text><text x="473.5" y="229" font-size="9.7" stroke="#000" stroke-width="0.16" textLength="82.8" lengthAdjust="spacing">+ backward() : void</text><text x="473.5" y="241" font-size="9.7" stroke="#000" stroke-width="0.16" textLength="65.4" lengthAdjust="spacing">+ brake() : void</text><rect x="465.27" y="177.58" width="102.65" height="61.35" fill="none" stroke="#000" stroke-width="1.55"/><path d="M465.8 196.5H567.4" stroke="#2e2e2e" stroke-width="1"/><path d="M465.8 203H567.4" stroke="#6e6e5e" stroke-width="1.3"/><text x="500.6" y="191" font-size="9.7" font-weight="700" textLength="33.4" lengthAdjust="spacing">Engine</text><rect x="464.5" y="271" width="79.4" height="61.8" fill="#ffffcc"/><text x="472.7" y="310" font-size="9.7" stroke="#000" stroke-width="0.16" textLength="60.4" lengthAdjust="spacing">+ right() : void</text><text x="472.7" y="323" font-size="9.7" stroke="#000" stroke-width="0.16" textLength="54.2" lengthAdjust="spacing">+ left() : void</text><text x="472.7" y="335" font-size="9.7" stroke="#000" stroke-width="0.16" textLength="50.2" lengthAdjust="spacing">+ fix() : void</text><rect x="464.77" y="271.27" width="78.85" height="61.25" fill="none" stroke="#000" stroke-width="1.55"/><path d="M465.3 289.5H543.1" stroke="#2e2e2e" stroke-width="1"/><path d="M465.3 296.5H543.1" stroke="#2e2e2e" stroke-width="1"/><text x="484.7" y="285" font-size="9.7" font-weight="700" textLength="40.2" lengthAdjust="spacing">Steering</text><rect x="466.6" y="367.3" width="112.1" height="61.4" fill="#ffffcc"/><text x="474.6" y="400" font-size="9.7" stroke="#000" stroke-width="0.16" textLength="93.4" lengthAdjust="spacing">- Threshold : boolean</text><text x="475" y="419" font-size="9.7" stroke="#000" stroke-width="0.16" textLength="72.4" lengthAdjust="spacing">+ isBlack() : void</text><text x="475" y="431" font-size="9.7" stroke="#000" stroke-width="0.16" textLength="73" lengthAdjust="spacing">+ isWhite() : void</text><rect x="466.88" y="367.57" width="111.55" height="60.85" fill="none" stroke="#000" stroke-width="1.55"/><path d="M467.4 386.5H577.9" stroke="#2e2e2e" stroke-width="1"/><path d="M467.4 405.5H577.9" stroke="#2e2e2e" stroke-width="1"/><text x="504.6" y="381" font-size="9.7" font-weight="700" textLength="36" lengthAdjust="spacing">Monitor</text><rect x="644.17" y="224.58" width="85.45" height="40.95" fill="#ffffcc" stroke="#000" stroke-width="1.55"/><path d="M644.7 255.5H729.1" stroke="#2e2e2e" stroke-width="1"/><path d="M644.7 261.5H729.1" stroke="#2e2e2e" stroke-width="1"/><text x="654.5" y="238" font-size="9.7" stroke="#000" stroke-width="0.16" textLength="65.6" lengthAdjust="spacing">&lt;&lt;boundary&gt;&gt;</text><text x="673.1" y="250" font-size="9.7" font-weight="700" textLength="27.2" lengthAdjust="spacing">Motor</text><rect x="642.67" y="380.47" width="85.15" height="41.95" fill="#ffffcc" stroke="#000" stroke-width="1.55"/><path d="M643.2 411.5H727.3" stroke="#2e2e2e" stroke-width="1"/><path d="M643.2 418.5H727.3" stroke="#2e2e2e" stroke-width="1"/><text x="653" y="394" font-size="9.7" stroke="#000" stroke-width="0.16" textLength="65.2" lengthAdjust="spacing">&lt;&lt;boundary&gt;&gt;</text><text x="656.7" y="406" font-size="9.7" font-weight="700" textLength="58" lengthAdjust="spacing">LightSensor</text></svg>
</div></body></html>
